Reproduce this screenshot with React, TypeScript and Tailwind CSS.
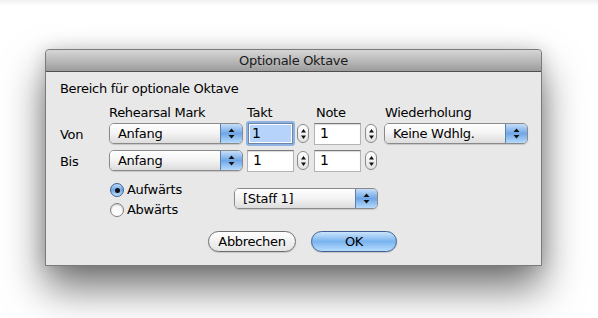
import React from 'react';

const font = { fontFamily: '"DejaVu Sans", "Noto Sans", sans-serif' };

const Arrows = () => (
  <svg width="7" height="11" viewBox="0 0 7 11">
    <path d="M3.5 0.5 L6.5 4 L0.5 4 Z" fill="#111" />
    <path d="M3.5 10.5 L6.5 7 L0.5 7 Z" fill="#111" />
  </svg>
);

const Popup = ({ label, w }: { label: string; w: string }) => (
  <div
    className={`${w} h-[21px] flex rounded-[5px] border border-[#8a8a8a] overflow-hidden shadow-[0_1px_1px_rgba(0,0,0,0.15)]`}
  >
    <div className="flex-1 flex items-center pl-[8px] text-[13px] tracking-[-0.3px] text-black bg-gradient-to-b from-white via-[#f3f3f3] to-[#dcdcdc]">
      {label}
    </div>
    <div className="w-[22px] flex items-center justify-center border-l border-[#5d7fae] bg-gradient-to-b from-[#c6def8] via-[#6fa6e6] to-[#b6dafb]">
      <Arrows />
    </div>
  </div>
);

const Stepper = () => (
  <div className="w-[12px] h-[19px] rounded-full border border-[#8a8a8a] bg-gradient-to-b from-white to-[#e2e2e2] flex items-center justify-center">
    <svg width="5" height="12" viewBox="0 0 5 12">
      <path d="M2.5 1 L5 4.5 L0 4.5 Z" fill="#111" />
      <path d="M2.5 11 L5 7.5 L0 7.5 Z" fill="#111" />
    </svg>
  </div>
);

const Field = ({ focused }: { focused?: boolean }) =>
  focused ? (
    <div className="w-[49px] h-[25px] rounded-[3px] bg-[#8fb4e3] p-[2px] flex">
      <div className="flex-1 bg-white border border-[#6d86a8] p-[1px] flex">
        <div className="flex-1 bg-[#b5d3fb] flex items-center pl-[2px] text-[14px] text-black">1</div>
      </div>
    </div>
  ) : (
    <div className="w-[47px] h-[22px] bg-white border border-[#b4b4b4] border-t-[#7a7a7a] shadow-[inset_0_1px_1px_rgba(0,0,0,0.15)] flex items-center pl-[5px] text-[14px] text-black">
      1
    </div>
  );

const Radio = ({ on, label }: { on?: boolean; label: string }) => (
  <div className="flex items-center h-[20px]">
    {on ? (
      <div className="w-[14px] h-[14px] rounded-full border border-[#3c5d8e] bg-gradient-to-b from-[#b8d8f8] via-[#6fa6e6] to-[#c2e0fc] flex items-center justify-center">
        <div className="w-[5px] h-[5px] rounded-full bg-[#111]" />
      </div>
    ) : (
      <div className="w-[14px] h-[14px] rounded-full border border-[#7f7f7f] bg-gradient-to-b from-[#f4f4f4] to-white shadow-[inset_0_1px_1px_rgba(0,0,0,0.2)]" />
    )}
    <span className="ml-[3px] text-[13px] tracking-[-0.3px] text-black">{label}</span>
  </div>
);

export default function App() {
  return (
    <div className="w-[598px] h-[318px] bg-white relative overflow-hidden" style={font}>
      <div className="h-[6px] bg-gradient-to-b from-[#f0f0f0] to-white" />
      <div className="ml-[45px] mt-[43px] w-[497px] h-[217px] bg-[#e8e8e8] border border-[#7a7a7a] rounded-t-[4px] shadow-[0_22px_40px_rgba(0,0,0,0.55),0_0_18px_rgba(0,0,0,0.15)]">
        {/* Title bar */}
        <div className="h-[22px] rounded-t-[4px] bg-gradient-to-b from-[#d6d6d6] via-[#bababa] to-[#9c9c9c] border-b border-[#4f4f4f] flex items-center justify-center text-[13px] tracking-[-0.3px] text-[#1a1a1a]">
          Optionale Oktave
        </div>

        <div className="pl-[14px] pt-[9px] text-[13px] tracking-[-0.3px] text-black">
          <div className="h-[16px] leading-[16px]">Bereich für optionale Oktave</div>

          {/* column labels */}
          <div className="flex h-[16px] leading-[16px] mt-[8px]">
            <div className="w-[49px]" />
            <div className="w-[138px]">Rehearsal Mark</div>
            <div className="w-[69px]">Takt</div>
            <div className="w-[69px]">Note</div>
            <div>Wiederholung</div>
          </div>

          {/* Von row */}
          <div className="flex items-center h-[25px]">
            <div className="w-[49px] pt-[2px]">Von</div>
            <Popup label="Anfang" w="w-[134px]" />
            <div className="ml-[3px]">
              <Field focused />
            </div>
            <div className="ml-[2px]">
              <Stepper />
            </div>
            <div className="ml-[5px]">
              <Field />
            </div>
            <div className="ml-[4px]">
              <Stepper />
            </div>
            <div className="ml-[7px]">
              <Popup label="Keine Wdhlg." w="w-[144px]" />
            </div>
          </div>

          {/* Bis row */}
          <div className="flex items-center h-[25px] mt-[2px]">
            <div className="w-[49px] pt-[2px]">Bis</div>
            <Popup label="Anfang" w="w-[134px]" />
            <div className="ml-[4px]">
              <Field />
            </div>
            <div className="ml-[3px]">
              <Stepper />
            </div>
            <div className="ml-[5px]">
              <Field />
            </div>
            <div className="ml-[4px]">
              <Stepper />
            </div>
          </div>

          {/* direction + staff */}
          <div className="flex items-start mt-[7px]">
            <div className="w-[50px]" />
            <div className="flex flex-col w-[124px]">
              <Radio on label="Aufwärts" />
              <Radio label="Abwärts" />
            </div>
            <div className="mt-[8px]">
              <Popup label="[Staff 1]" w="w-[144px]" />
            </div>
          </div>

          {/* buttons */}
          <div className="flex items-center mt-[11px]">
            <div className="w-[148px]" />
            <div className="w-[88px] h-[21px] rounded-full border border-[#6f6f6f] bg-gradient-to-b from-white via-[#f1f1f1] to-[#e4e4e4] flex items-center justify-center shadow-[0_1px_1px_rgba(0,0,0,0.15)]">
              Abbrechen
            </div>
            <div className="ml-[15px] w-[86px] h-[21px] rounded-full border border-[#3f5f93] bg-gradient-to-b from-[#cbe4fb] via-[#79b3ef] to-[#b7dcfd] flex items-center justify-center shadow-[0_1px_1px_rgba(0,0,0,0.15)]">
              OK
            </div>
          </div>
        </div>
      </div>
    </div>
  );
}
